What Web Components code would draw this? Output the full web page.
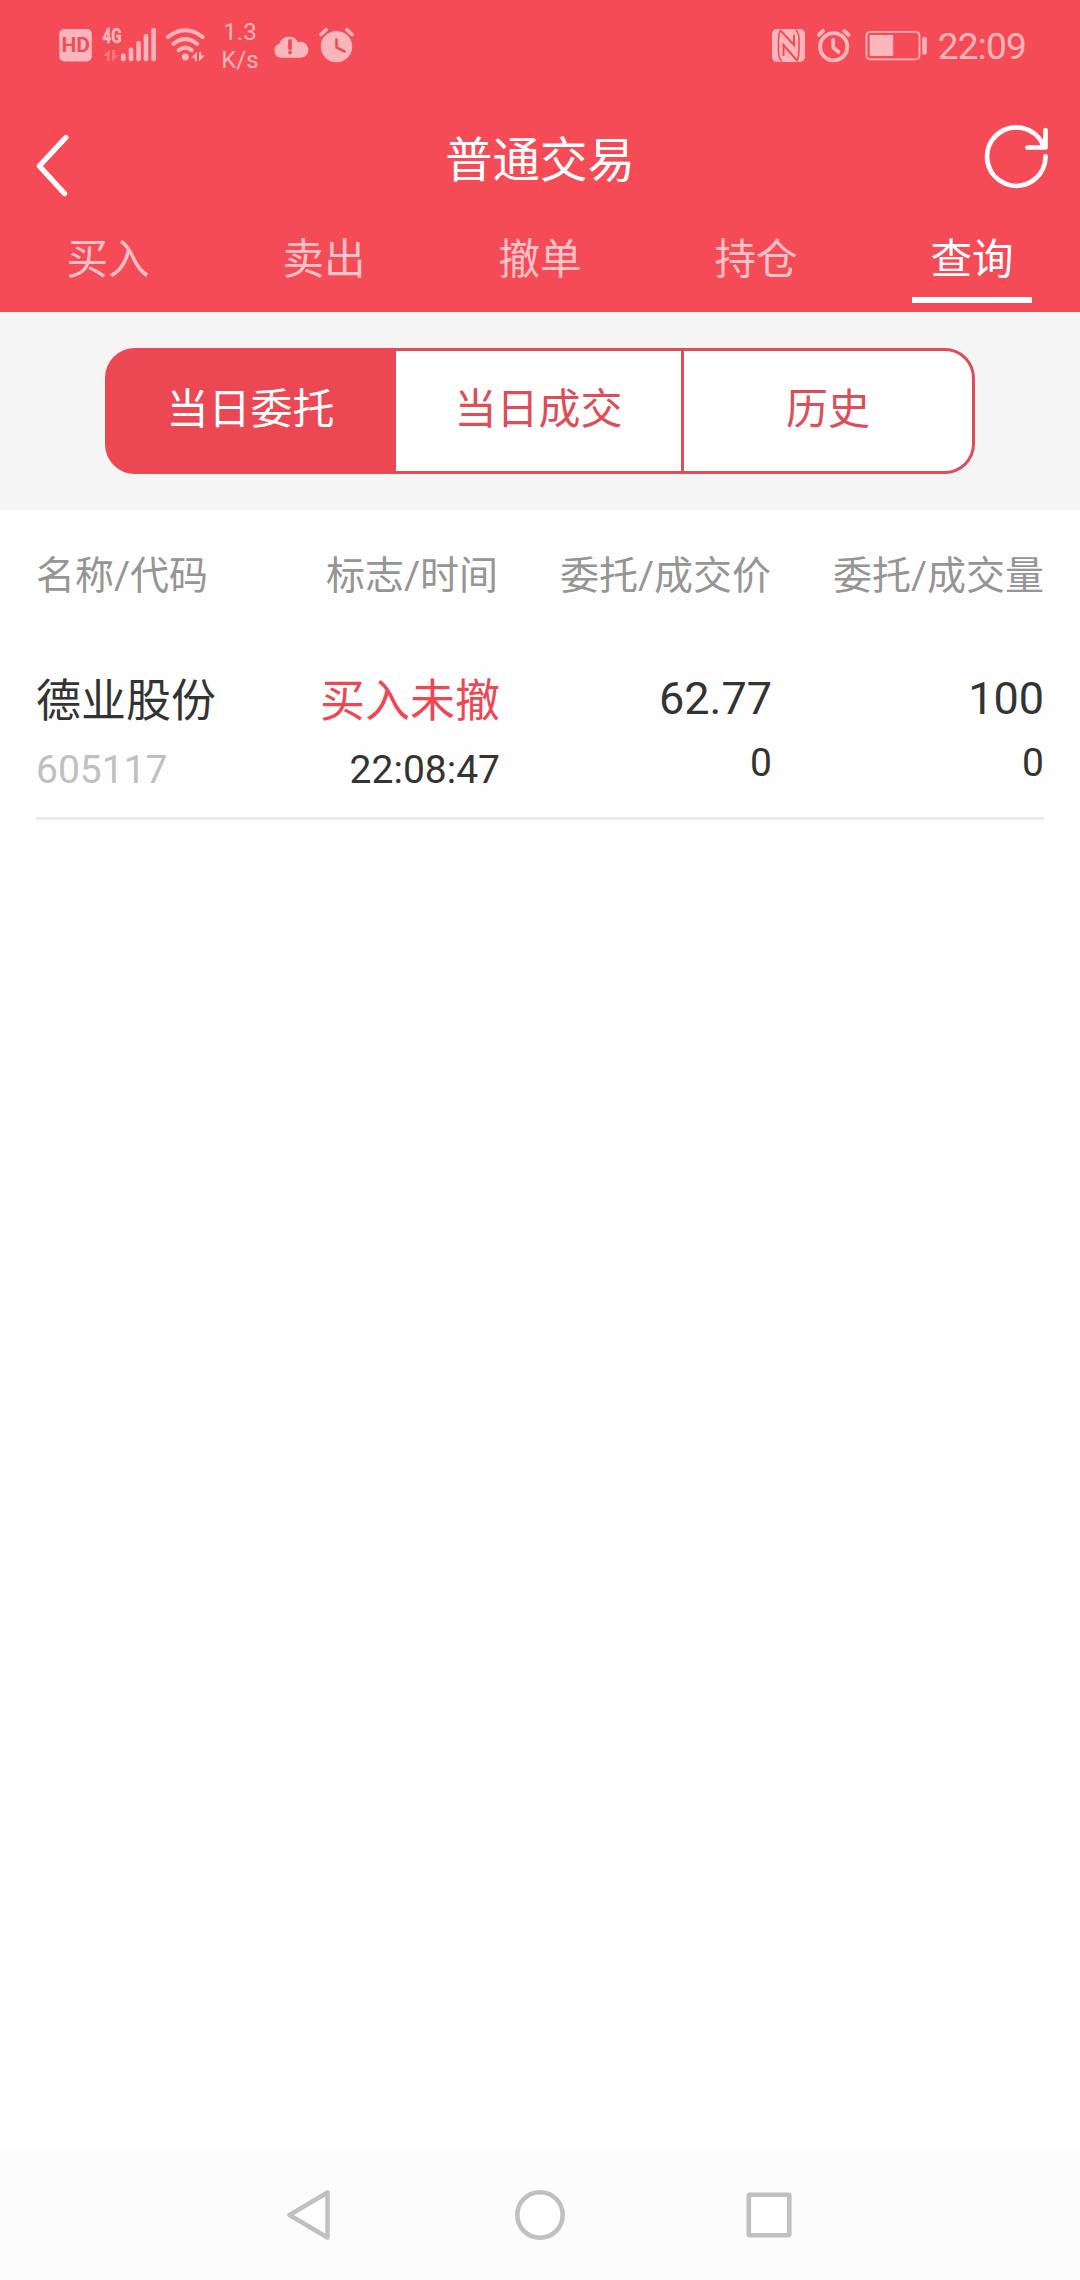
<!DOCTYPE html>
<html lang="zh-CN">
<head>
<meta charset="utf-8">
<title>普通交易</title>
<style>
html,body{margin:0;padding:0;background:#fefefe}
body{width:1080px;height:2280px;overflow:hidden;font-family:Roboto,"Noto Sans CJK SC",sans-serif}
</style>
</head>
<body>
<trade-app></trade-app>
<script>
function define(name, css, html) {
  const tpl = document.createElement('template');
  tpl.innerHTML = '<style>*{box-sizing:border-box}svg{display:block;flex:none}' + css + '</style>' + html;
  customElements.define(name, class extends HTMLElement {
    constructor() {
      super();
      this.attachShadow({ mode: 'open' }).appendChild(tpl.content.cloneNode(true));
    }
  });
}

define('status-bar', `
:host{display:flex;justify-content:space-between;height:90px;padding:0 54px 0 58px;color:#fbb6bb}
.side{display:flex;height:90px;align-items:flex-start}
.net{width:48px;padding-top:18px;font-size:24px;line-height:28px;text-align:center}
.time{font-size:37px;line-height:93px;margin-left:8px;letter-spacing:-.8px}
`, `
<div class="side">
<svg width="158" height="90" viewBox="58 0 158 90" fill="currentColor">
<rect x="59.3" y="29" width="32.5" height="32.5" rx="5"/>
<text x="61.500" y="52" font-size="20" font-weight="700" fill="#f54b56" textLength="28.500" lengthAdjust="spacingAndGlyphs">HD</text>
<text x="102.600" y="43" font-size="21" font-weight="700" stroke="currentColor" stroke-width=".5" textLength="19" lengthAdjust="spacingAndGlyphs">4G</text>
<path d="M109.5 50V61H107V56H103ZM112 50V61L119.5 55H115V50Z" opacity=".4"/>
<rect x="121" y="53.5" width="4.6" height="7.7" rx="2"/><rect x="128.7" y="47.5" width="4.6" height="13.7" rx="2"/><rect x="136.3" y="41" width="4.6" height="20.2" rx="2"/><rect x="143.7" y="34" width="4.6" height="27.2" rx="2"/><rect x="151.3" y="28" width="4.6" height="33.2" rx="2"/>
<g fill="none" stroke="currentColor" stroke-width="4" stroke-linecap="round"><path d="M168 37Q185.300 23.500 202.600 37M173.500 43.800Q185.300 34.500 197 43.800M178.800 50.200Q185.300 45 191.800 50.200"/></g>
<circle cx="185.300" cy="57" r="3.400"/>
<path d="M196.800 52V61.200H194.800V58H191ZM199 52V61.200L205 55.500H201.200V52Z"/>
</svg>
<div class="net">1.3<br>K/s</div>
<svg width="90" height="90" viewBox="264 0 90 90" fill="currentColor">
<path d="M281 57.800A7.200 7.200 0 0 1 279.300 43.800A10.200 10.200 0 0 1 298 42.200A8 8 0 1 1 300.500 57.800Z"/>
<path d="M290 41V48.300M290 52.500V52.600" stroke="#f54b56" stroke-width="3.800" stroke-linecap="round"/>
<circle cx="336.500" cy="46.600" r="15.700"/>
<path d="M321 34.500L326 29.800M352 34.500L347 29.800" stroke="currentColor" stroke-width="3.500" stroke-linecap="round"/>
<path d="M336.500 38.500V47.500L345.500 52" fill="none" stroke="#f54b56" stroke-width="2.600"/>
</svg>
</div>
<div class="side">
<svg width="160" height="90" viewBox="770 0 160 90" fill="currentColor">
<rect x="772" y="29" width="33" height="33" rx="5"/>
<g fill="none" stroke="#f54b56" stroke-width="2">
<path d="M780.500 29.500Q778.500 34 778.500 41V52Q778.500 58 782 61.500M795.500 29.500Q799 33 799 39V50Q799 57 797 61.500" stroke-width="1.600"/>
<path d="M780.500 30.500L794 45V35M783.500 56V45L797 60.500"/></g>
<g fill="none" stroke="currentColor"><circle cx="833.700" cy="46.800" r="13.600" stroke-width="3.800"/><path d="M833.200 40V47.500L838.500 52" stroke-width="3.800" stroke-linecap="round" stroke-linejoin="round"/><path d="M818.800 35L823 31M848.500 35L844.200 31" stroke-width="3.800" stroke-linecap="round"/>
<rect x="866.500" y="31.800" width="53" height="27.600" rx="4" stroke-width="1.800"/></g>
<rect x="869.700" y="35" width="23.500" height="21" rx="1"/><rect x="922.300" y="37" width="4.400" height="17.500" rx="1.500"/>
</svg>
<div class="time">22:09</div>
</div>`);

define('title-bar', `
:host{display:flex;height:130px;align-items:center;justify-content:space-between;padding:0 28px;color:#fff}
h1{margin:0;padding-top:13px;font-weight:400;font-size:47.500px;line-height:117px}
`, `
<svg width="70" height="130" viewBox="28 90 70 130" fill="none" stroke="currentColor" stroke-width="5.400" stroke-linecap="round" stroke-linejoin="round"><path d="M65.800 137.500L39.300 166L64.500 193.500"/></svg>
<h1><slot></slot></h1>
<svg width="70" height="130" viewBox="982 90 70 130" fill="none" stroke="currentColor" stroke-width="4.700" stroke-linecap="round" stroke-linejoin="round"><path d="M1045.500 156.300A29.200 29.200 0 1 1 1043.500 146M1045.500 130V147.500H1027.500"/></svg>`);

define('trade-tab', `
:host{display:flex;flex:1;flex-direction:column;align-items:center;justify-content:space-between;height:92px;padding-bottom:9px;color:#fdc2c7;font-size:41.500px;line-height:77px}
:host([active]){color:#fff}
span{margin-top:1px;height:72px}
i{display:block;width:120px;height:6px}
:host([active]) i{background:#fff}
`, `<span><slot></slot></span><i></i>`);

define('trade-tabs', `:host{display:flex;height:92px}`, `<slot></slot>`);

define('segment-item', `
:host{--c:#dc4e58;display:block;box-sizing:border-box;flex:1 1 0;height:126px;line-height:118px;text-align:center;font-size:42px;color:var(--c);background:#fff;border:3px solid var(--c);border-left-width:0}
:host([active]){--c:#ec4853;flex:0 0 291px;background:var(--c);color:#fff;border-left-width:3px}
:host(:first-child){border-radius:30px 0 0 30px}
:host(:last-child){border-radius:0 30px 30px 0;flex:0 0 291px}
`, `<slot></slot>`);

define('segment-control', `
:host{display:flex;justify-content:center;height:198px;padding-top:36px;background:#f5f5f5}
.box{display:flex;width:870px;height:126px}
`, `<div class="box"><slot></slot></div>`);

define('order-row', `
:host{display:grid;margin:0 36px}
::slotted(*){display:block;text-align:right}
::slotted(:first-child){text-align:left}
:host([head]){grid-template-columns:190px 272px 273px 273px;font-size:39px;line-height:39px;height:150px;padding-top:47px;color:#959595}
:host(:not([head])){grid-template-columns:190px 274px 272px 272px;height:160px;border-bottom:3px solid #ebebeb;color:#333}
`, `<slot></slot>`);

define('order-cell', `
:host{display:block;padding-top:12px}
div{font-size:45px;line-height:59px}
p{margin:0;padding-top:16px;font-size:39px;line-height:46px}
:host([num]) div{line-height:53px}
:host([num]) p{padding-top:15px}
`, `<div><slot></slot></div><p><slot name="sub"></slot></p>`);

define('nav-bar', `
:host{display:flex;justify-content:space-between;align-items:center;height:130px;padding:0 286px;background:#fcfcfc}
`, `
<svg width="50" height="60" viewBox="286 2185 50 60" fill="none" stroke="#c0c0c0" stroke-width="4.500" stroke-linejoin="round"><path fill="#fff" d="M289.500 2215L327.500 2192.500V2237.500Z"/></svg>
<svg width="60" height="60" viewBox="510 2185 60 60" fill="#fff" stroke="#c0c0c0" stroke-width="4.600"><circle cx="540" cy="2215" r="22.700"/></svg>
<svg width="50" height="60" viewBox="744 2185 50 60" fill="#fff" stroke="#c0c0c0" stroke-width="4.600" stroke-linejoin="round"><rect x="748.800" y="2194.700" width="40.500" height="40.500" rx="1"/></svg>`);

define('trade-app', `
:host{display:flex;flex-direction:column;width:1080px;height:2280px}
header{background:#f54b56;height:312px}
main{flex:1}
[slot=sub]{display:block}
.buy{color:#ec4853}
.code{color:#c0c0c0}
`, `
<header>
<status-bar></status-bar>
<title-bar>普通交易</title-bar>
<trade-tabs><trade-tab>买入</trade-tab><trade-tab>卖出</trade-tab><trade-tab>撤单</trade-tab><trade-tab>持仓</trade-tab><trade-tab active>查询</trade-tab></trade-tabs>
</header>
<segment-control><segment-item active>当日委托</segment-item><segment-item>当日成交</segment-item><segment-item>历史</segment-item></segment-control>
<main>
<order-row head><span>名称/代码</span><span>标志/时间</span><span>委托/成交价</span><span>委托/成交量</span></order-row>
<order-row>
<order-cell>德业股份<span class="code" slot="sub">605117</span></order-cell>
<order-cell><span class="buy">买入未撤</span><span slot="sub">22:08:47</span></order-cell>
<order-cell num>62.77<span slot="sub">0</span></order-cell>
<order-cell num>100<span slot="sub">0</span></order-cell>
</order-row>
</main>
<nav-bar></nav-bar>`);
</script>
</body>
</html>
